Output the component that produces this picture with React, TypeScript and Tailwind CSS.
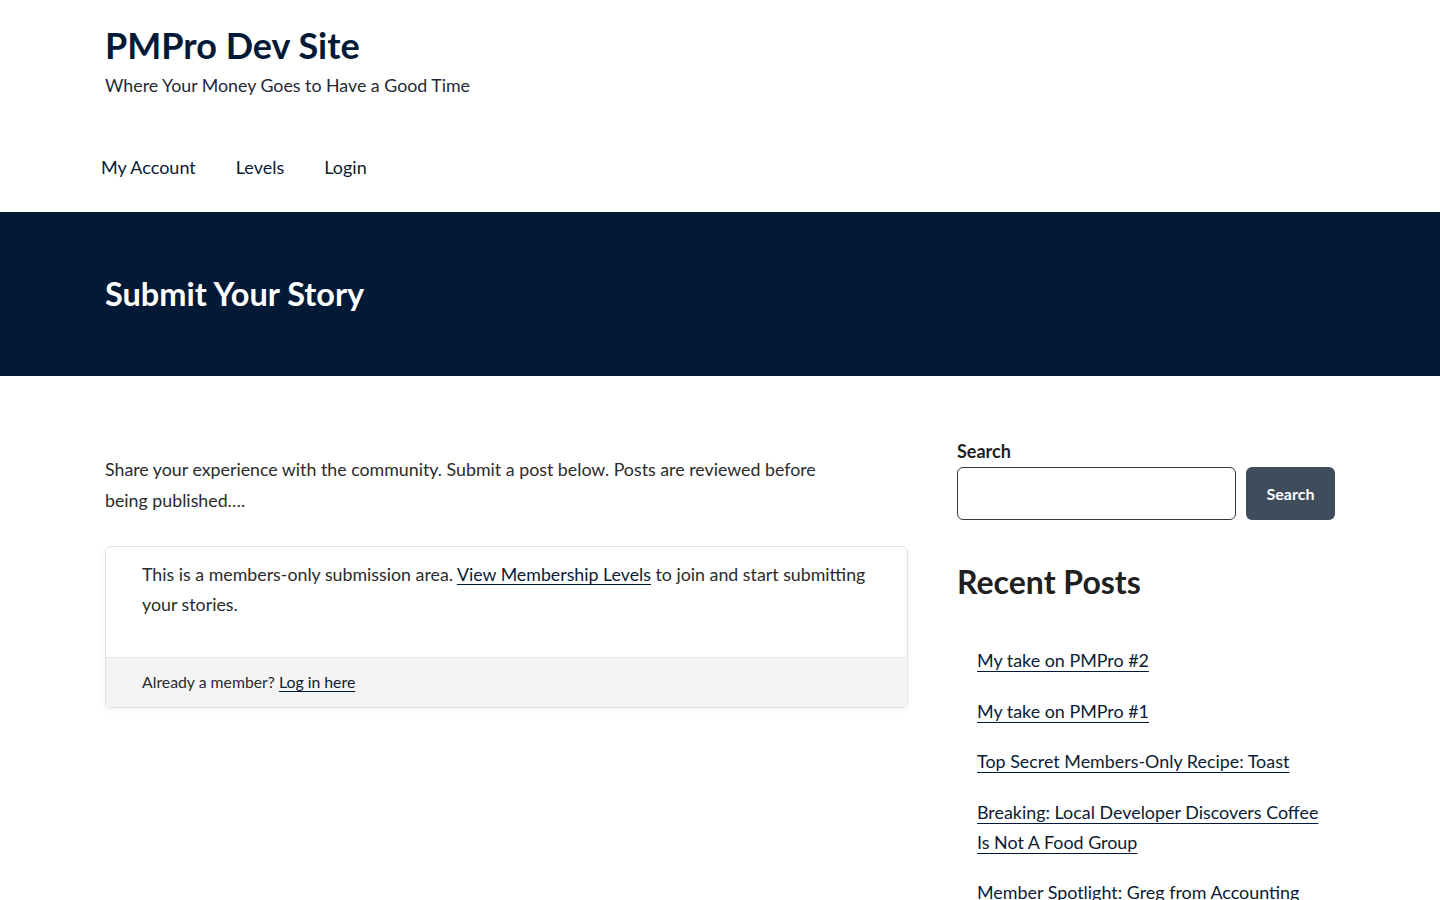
import React from 'react';

const navItems = ['My Account', 'Levels', 'Login'];

const recentPosts = [
  'My take on PMPro #2',
  'My take on PMPro #1',
  'Top Secret Members-Only Recipe: Toast',
  'Breaking: Local Developer Discovers Coffee Is Not A Food Group',
  'Member Spotlight: Greg from Accounting',
];

export default function App() {
  return (
    <div className="min-h-screen bg-white text-[#2b2b2b] font-['Lato','Open_Sans',sans-serif]">
      {/* Site header */}
      <header className="px-[105px] pt-[23px]">
        <h1 className="text-[36px] font-bold leading-[44px] text-[#021a38]">PMPro Dev Site</h1>
        <p className="mt-[6px] text-[17.8px] leading-[24px] text-[#1f2937]">
          Where Your Money Goes to Have a Good Time
        </p>
        <nav className="mt-[47px] -ml-[4px] flex h-[68px] items-start gap-[40px] pt-[11px]">
          {navItems.map((item) => (
            <a key={item} href="#" className="text-[18px] leading-[24px] text-[#0b1b33]">
              {item}
            </a>
          ))}
        </nav>
      </header>

      {/* Page title band */}
      <section className="flex h-[164px] items-center bg-[#031a36] px-[105px]">
        <h2 className="text-[32.5px] font-bold text-white">Submit Your Story</h2>
      </section>

      {/* Content */}
      <div className="flex gap-[49px] px-[105px] pt-[66px]">
        <main className="w-[803px] shrink-0">
          <p className="mt-[12px] pr-[80px] text-[17.8px] leading-[31px]">
            Share your experience with the community. Submit a post below. Posts are reviewed before
            being published….
          </p>
          <div className="mt-[30px] overflow-hidden rounded-[6px] border border-[#e3e3e3] shadow-[0_2px_6px_rgba(0,0,0,0.06)]">
            <div className="px-[36px] pt-[12px] pb-[38px] text-[17.8px] leading-[30px]">
              This is a members-only submission area.{' '}
              <a href="#" className="text-[#0b1b33] underline decoration-[#021a38] underline-offset-[3px]">
                View Membership Levels
              </a>{' '}
              to join and start submitting your stories.
            </div>
            <div className="border-t border-[#e6e6e6] bg-[#f4f4f4] px-[36px] pt-[11px] pb-[13px] text-[15.8px] leading-[25px]">
              Already a member?{' '}
              <a href="#" className="text-[#0b1b33] underline decoration-[#021a38] underline-offset-[3px]">
                Log in here
              </a>
            </div>
          </div>
        </main>

        <aside className="-mt-[5px] w-[378px] shrink-0">
          <label className="block text-[18px] font-bold leading-[28px] text-[#1f1f1f]">Search</label>
          <div className="mt-[2px] flex gap-[10px]">
            <input
              type="text"
              className="h-[53px] w-[279px] rounded-[6px] border border-[#3a3a3a] bg-white px-3"
            />
            <button className="h-[53px] w-[89px] rounded-[6px] bg-[#3e4c5c] text-[16px] font-bold text-white">
              Search
            </button>
          </div>

          <h2 className="mt-[42px] text-[32px] font-bold leading-[40px] text-[#1f1f1f]">Recent Posts</h2>
          <ul className="mt-[43px] flex flex-col gap-[20.5px] pl-[20px] pr-[12px]">
            {recentPosts.map((post) => (
              <li key={post} className="text-[17.9px] leading-[30px]">
                <a href="#" className="text-[#0b1b33] underline decoration-[#021a38] underline-offset-[4px]">
                  {post}
                </a>
              </li>
            ))}
          </ul>
        </aside>
      </div>
    </div>
  );
}
